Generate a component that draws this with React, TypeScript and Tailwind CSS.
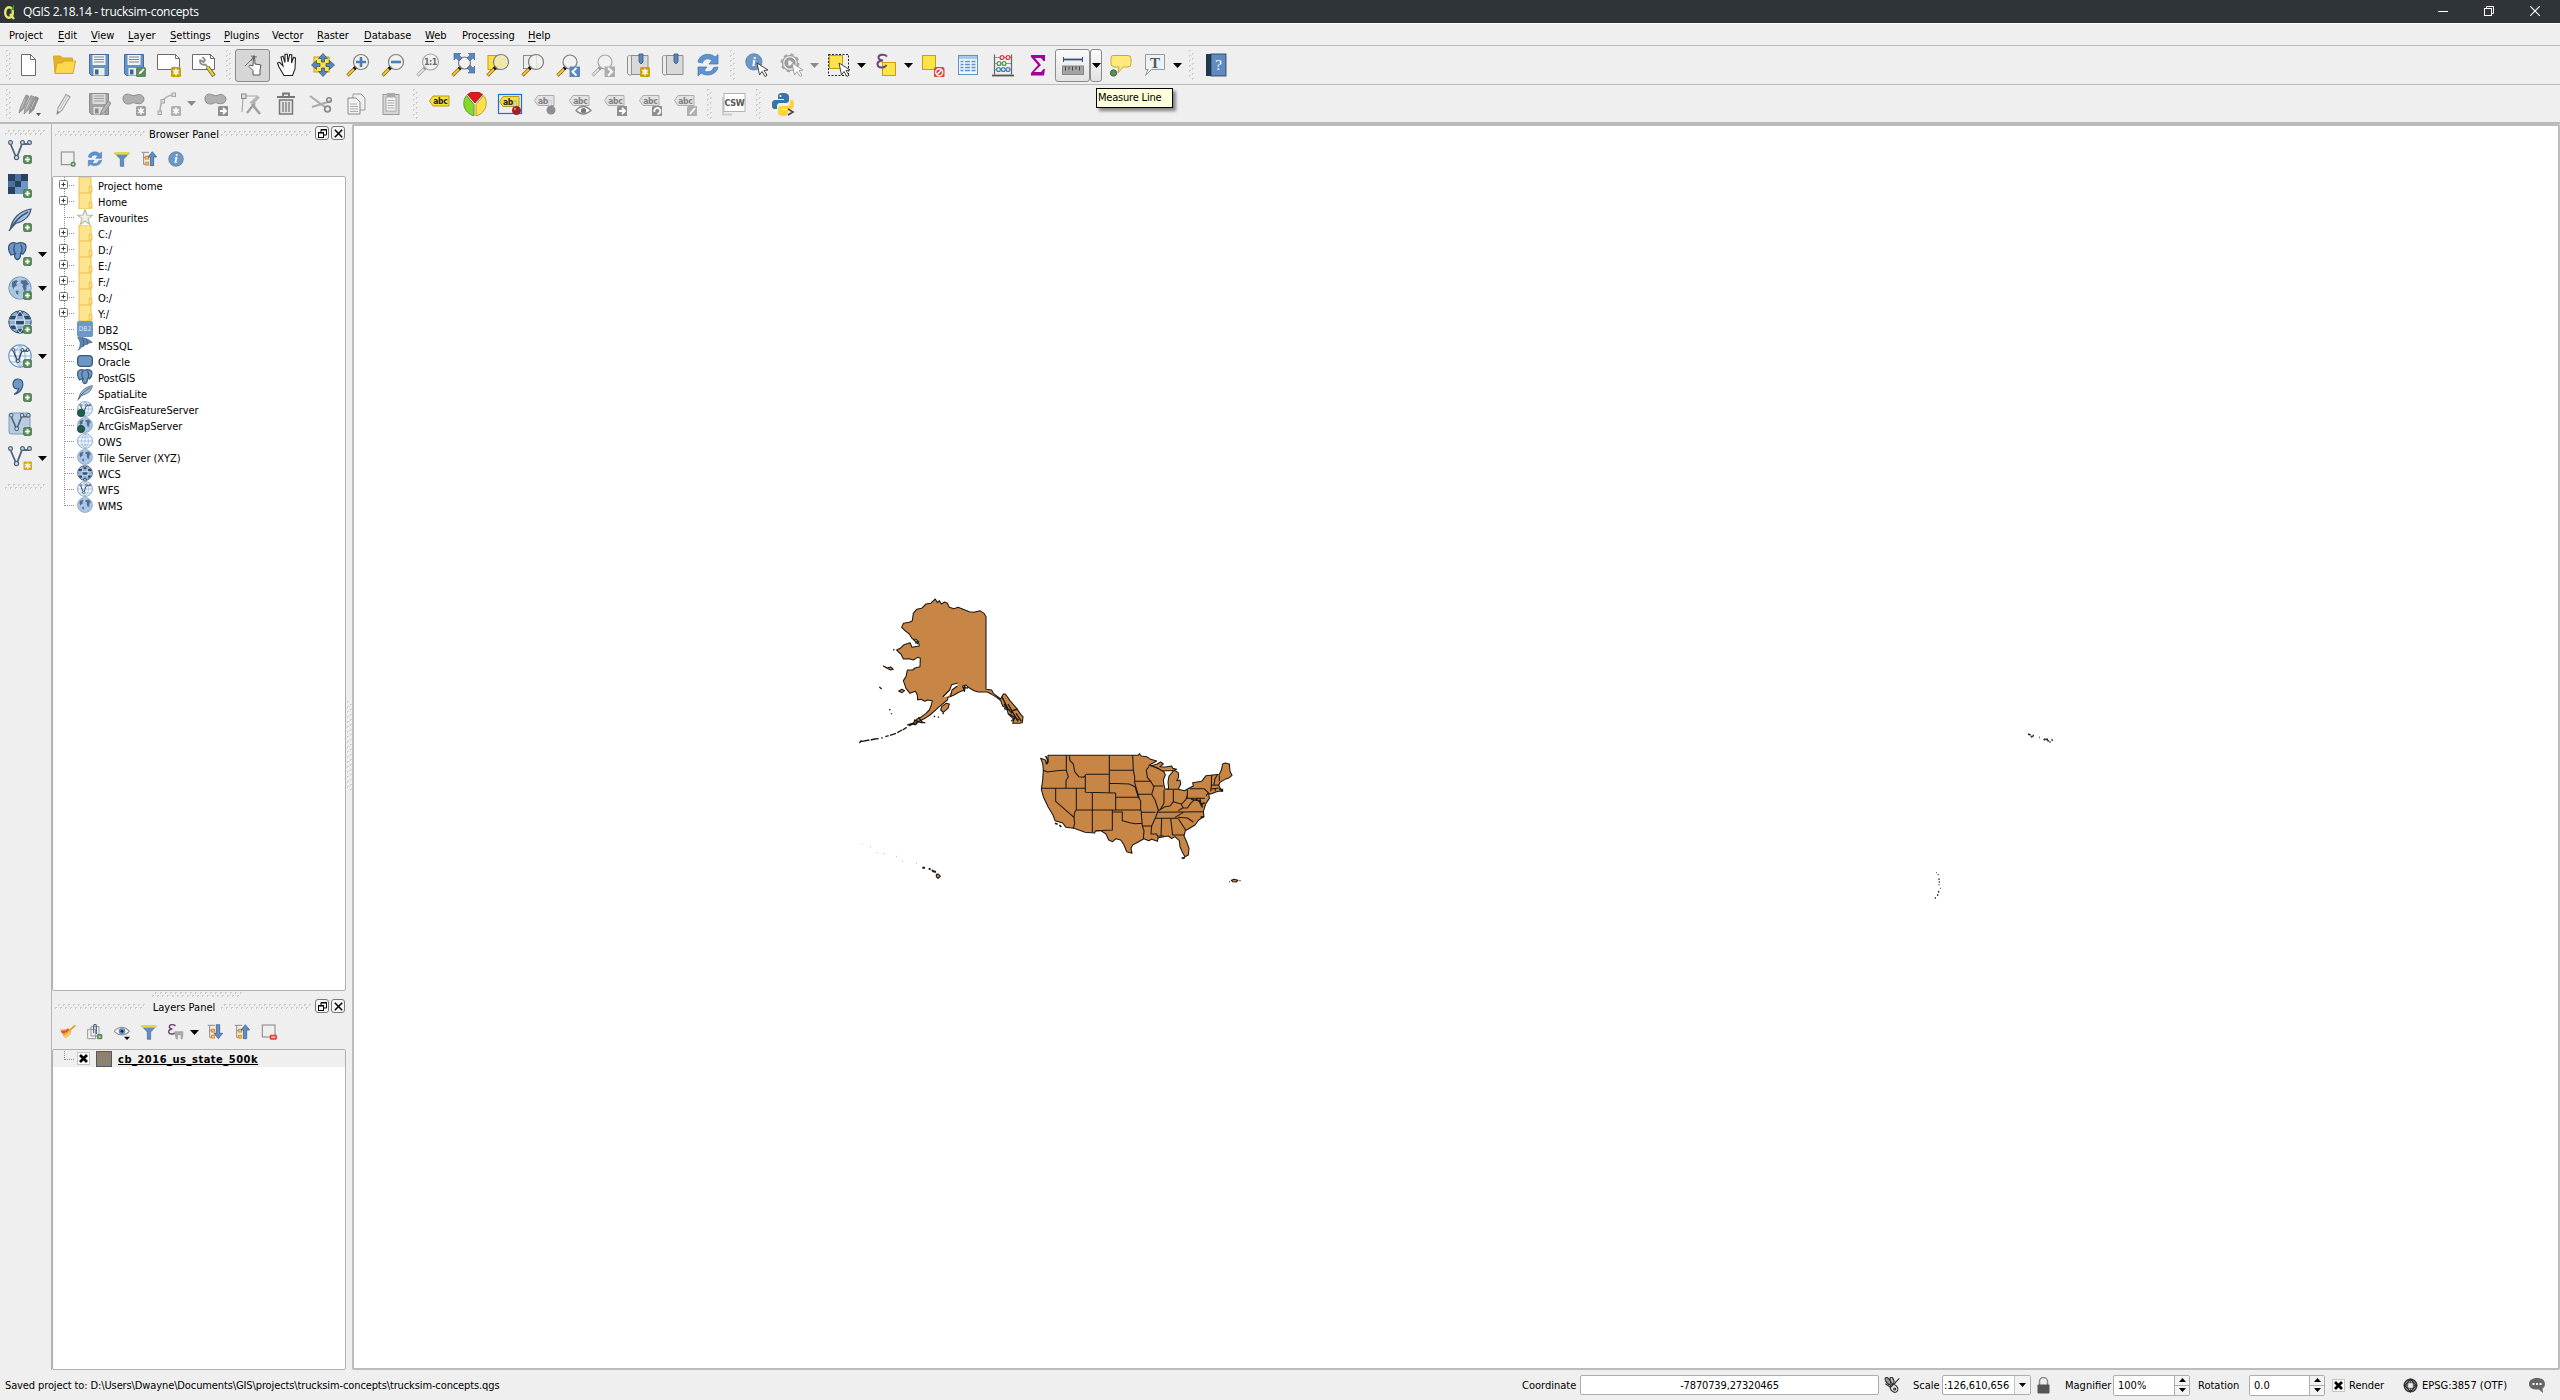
import React from "react";

type P = { children?: React.ReactNode };

const BLUE = "#6d97c4";
const NAVY = "#3d5a7a";

function Ic({ s = 24, children }: P & { s?: number }) {
  return (
    <svg width={s} height={s} viewBox="0 0 24 24" fill="none" className="block shrink-0">
      {children}
    </svg>
  );
}

/* ---------- badges ---------- */
const Plus = () => (
  <g>
    <rect x="15.5" y="15.5" width="8" height="8" rx="1.5" fill="#5b8c5a" stroke="#4a7a49" strokeWidth=".8" />
    <path d="M19.5 17v5M17 19.5h5" stroke="#fff" strokeWidth="1.7" />
  </g>
);
const Star = ({ c = "#c9a000" }: { c?: string }) => (
  <g>
    <rect x="14" y="14" width="10" height="10" rx="1.5" fill={c} />
    <path d="M19 15.5v7M16 17.2l6 3.6M22 17.2l-6 3.6" stroke="#fff" strokeWidth="1.5" />
  </g>
);
const GreyBadge = ({ d, c = "#8e8e8e" }: { d: string; c?: string }) => (
  <g>
    <rect x="14" y="14" width="10.5" height="10.5" rx="1.5" fill={c} />
    <path d={d} stroke="#fff" strokeWidth="1.8" />
  </g>
);

/* ---------- main toolbar ---------- */
const NewFile = () => (
  <Ic><path d="M4.500 1.500h9l5 5v16h-14z" fill="#fff" stroke="#6b6b6b" /><path d="M13.500 1.500v5h5" stroke="#6b6b6b" /></Ic>
);
const Open = () => (
  <Ic>
    <path d="M1.500 3h7l2 2h10v15H3z" fill="#e3b22c" stroke="#d9a520" />
    <path d="M3 20.500 5 10h5l2-2h11.500l-2.500 12.500z" fill="#ffd84f" stroke="#d9a520" />
  </Ic>
);
const Disk = ({ g }: { g?: boolean }) => (
  <g>
    <path d="M2.500 1.500h19v21h-17l-2-2z" fill={g ? "#a3a3a3" : "#6692c6"} stroke={g ? "#8a8a8a" : "#466b9b"} />
    <rect x="5.500" y="2" width="13" height="10" fill={g ? "#dcdcdc" : "#f3f3f3"} />
    <path d="M7 4h10M7 6.500h10M7 9h10" stroke={g ? "#9d9d9d" : "#7d8794"} />
    <rect x="6.500" y="15" width="11" height="7.500" fill={g ? "#ddd" : "#eee"} />
    <rect x="8" y="16.500" width="3.500" height="5" fill={g ? "#8a8a8a" : "#41648f"} />
  </g>
);
const Save = () => <Ic><Disk /></Ic>;
const SaveAs = () => (
  <Ic><Disk /><rect x="14" y="14" width="10" height="10" rx="1.5" fill="#5b8c5a" /><path d="M16.500 21.500l1-2.500 4-3.500 1 1-3.500 4z" fill="#fff" /></Ic>
);
const NewComposer = () => (
  <Ic><path d="M.5 1.500h18l4 4v11H.5z" fill="#fff" stroke="#6b6b6b" /><path d="M18.500 1.500v4h4" stroke="#6b6b6b" /><Star /></Ic>
);
const Wrench = () => (
  <Ic>
    <path d="M.5 1.500h18l4 4v11H.5z" fill="#fff" stroke="#6b6b6b" /><path d="M18.500 1.500v4h4" stroke="#6b6b6b" />
    <path d="M15.500 14l6.500 9" stroke="#6d5f1e" strokeWidth="4" /><path d="M15.500 14l6 8.500" stroke="#e9c84a" strokeWidth="2.500" />
    <path d="M8 6.500c-.5 4 2 6 5.500 5l2 2.500M8.500 7l3 2 1.500-2-2.500-3" stroke="#8a8a8a" strokeWidth="1.800" />
  </Ic>
);
const Touch = () => (
  <Ic>
    <path d="M12.500 3 12 13l-3-1-1 1.500 4 4V22h7v-5l1-5-6-1-.5-8z" fill="#fff" stroke="#555" />
    <path d="M13 2.500 10 8M13 4l-9 9M10 3l6 1" stroke="#666" strokeWidth=".9" />
  </Ic>
);
const Hand = () => (
  <Ic>
    <path d="M8 22.500 3 14l-1.500-4 2-.7L7 13 5 4l2-.8L9 9.500 9 1.200h2.300L12 9l1.700-7.500 2.100.3L15.500 10l2-5.500 2 .5-.5 11-2.500 6.500z" fill="#fff" stroke="#222" strokeWidth="1.100" />
  </Ic>
);
const Arrows4 = () => (
  <Ic>
    <rect x="3" y="4" width="15" height="15" fill="#ffe24a" stroke="#c9a000" />
    <g fill="#5a86bd" stroke="#2f5580" strokeWidth=".8">
      <path d="M12 .5l4.500 5h-3v3.500h-3V5.500h-3zM12 23.500l4.500-5h-3V15h-3v3.500h-3zM.5 12l5-4.500v3H9v3H5.500v3zM23.500 12l-5-4.500v3H15v3h3.500v3z" />
    </g>
  </Ic>
);
const Lens = ({ g, r = 7.5, cx = 15, cy = 9, children }: P & { g?: boolean; r?: number; cx?: number; cy?: number }) => (
  <g>
    <path d="M10 14 1.500 22.500" stroke={g ? "#a5a5a5" : "#8a6914"} strokeWidth="3.200" />
    <path d="M8 16 1.800 22.200" stroke={g ? "#e0e0e0" : "#fcc52d"} strokeWidth="1.800" />
    <path d="M10.500 13.500 8 16" stroke={g ? "#999" : "#111"} strokeWidth="3.200" />
    <circle cx={cx} cy={cy} r={r} fill="#f1f1ee" fillOpacity=".8" stroke={g ? "#a5a5a5" : "#7c7c7c"} strokeWidth="1.200" />
    {children}
  </g>
);
const ZoomIn = () => <Ic><Lens><path d="M15 4v10M10 9h10" stroke="#4b7cb5" strokeWidth="2.600" /></Lens></Ic>;
const ZoomOut = () => <Ic><Lens><path d="M10 9h10" stroke="#4b7cb5" strokeWidth="2.600" /></Lens></Ic>;
const Zoom11 = () => (
  <Ic><Lens g r={8} cx={14.5}><text x="14.500" y="12.300" textAnchor="middle" fill="#6a6a6a" className="font-['DejaVu_Sans'] text-[9px] font-bold tracking-[-0.5px]">1:1</text></Lens></Ic>
);
const ZoomFull = () => (
  <Ic><Lens r={6} cx={13.5} cy={10} />
    <path d="M3 0h7L8 2l3 3-3 3-3-3-2 2zM24 0v7l-2-2-3 3-3-3 3-3-2-2zM24 20h-7l2-2-3-3 3-3 3 3 2-2z" fill="#5a86bd" stroke="#3c638f" strokeWidth=".6" />
  </Ic>
);
const ZoomSel = () => <Ic><rect x="2" y="2.500" width="13" height="14" fill="#fbe04c" stroke="#c9a000" /><Lens><circle cx="15" cy="9" r="6" fill="#f0e7a8" /></Lens></Ic>;
const ZoomLayer = () => <Ic><rect x="2.500" y="2.500" width="13" height="13" stroke="#8a8a8a" fill="#eee" /><Lens /></Ic>;
const ZoomLast = () => (
  <Ic><Lens r={7} cx={14} /><rect x="13.500" y="13.500" width="10.500" height="10.500" fill="#5a86bd" /><path d="M20.500 15l-4 3.700 4 3.700" stroke="#fff" strokeWidth="2" /></Ic>
);
const ZoomNext = () => (
  <Ic><Lens g r={7} cx={14} /><rect x="13.500" y="13.500" width="10.500" height="10.500" fill="#adadad" /><path d="M17 15l4 3.700-4 3.700" stroke="#fff" strokeWidth="2" /></Ic>
);
const Book = () => (
  <g>
    <path d="M5 2.500h17v19H4z" fill="#d9d9d9" stroke="#8f8f8f" />
    <path d="M1.500 4c0-2 4-2 4 0v17c0 2-4 1-4-1z" fill="#ececec" stroke="#8f8f8f" />
    <path d="M13 1h4v8l-2 2-2-2z" fill="#5a86bd" stroke="#33557f" strokeWidth=".8" />
  </g>
);
const Bookmark = () => <Ic><Book /></Ic>;
const BookmarkNew = () => <Ic><Book /><Star /></Ic>;
const RefreshG = () => (
  <g fill="#5e93cf" stroke="#3f74b0" strokeWidth=".7">
    <path d="M2 9c1-8 12-10 17-5l3-2.500V11h-9l3-3.500C13 5 8 5 6.500 10z" />
    <path d="M22 14c-1 8-12 10-17 6l-3 3v-9h9l-3 3.500c3 2 8 2 9.500-3z" />
  </g>
);
const Refresh = ({ s }: { s?: number }) => <Ic s={s}><RefreshG /></Ic>;
const Cursor = ({ g }: { g?: boolean }) => (
  <path d="M12 10l2.500 12 2.500-3.500 3 5 2-1.200-3-4.800 4-.5z" fill="#fff" stroke={g ? "#999" : "#333"} strokeWidth=".9" />
);
const InfoG = () => (
  <g>
    <circle cx="12" cy="12" r="11" fill="#6d97c4" stroke="#4c78a9" />
    <text x="12" y="18" textAnchor="middle" fill="#fff" className="font-['Liberation_Serif'] text-[18px] font-bold italic">i</text>
  </g>
);
const Identify = () => <Ic><g transform="translate(0 0) scale(.74)"><InfoG /></g><Cursor /></Ic>;
const Gear = () => (
  <Ic>
    <circle cx="10" cy="10" r="7.500" stroke="#9b9b9b" strokeWidth="1.200" fill="#e9e9e9" />
    <circle cx="10" cy="10" r="8.500" stroke="#a5a5a5" strokeWidth="1.800" strokeDasharray="3.500 3.170" />
    <circle cx="10" cy="10" r="5" fill="#a0a0a0" stroke="#8a8a8a" /><path d="M8.500 7l5 3-5 3z" fill="#fff" /><Cursor g />
  </Ic>
);
const SelectI = () => (
  <Ic><rect x="1.500" y="1.500" width="20" height="21" stroke="#222" strokeDasharray="2 1.500" /><rect x="2.500" y="2.500" width="13" height="13" fill="#ffe24a" stroke="#c9a000" /><Cursor /></Ic>
);
const ExprSel = () => (
  <Ic>
    <rect x="8.500" y="9.500" width="13" height="13" fill="#fbe34a" stroke="#c9a000" />
    <path d="M13 3.500C11 1 4.500 1 4.500 4.500 4.500 7 9 7.500 9 7.500S3 7.500 3.500 11.500s7 4 9 .5" stroke="#6b4a77" strokeWidth="2" />
  </Ic>
);
const Deselect = () => (
  <Ic><rect x="1.500" y="2.500" width="13" height="14" fill="#fbe34a" stroke="#c9a000" /><rect x="13" y="14" width="10.500" height="10.500" rx="2" fill="#d8463f" /><circle cx="18.200" cy="19.200" r="3.500" stroke="#fff" strokeWidth="1.400" /><path d="M16 21.500l4.500-4.500" stroke="#fff" strokeWidth="1.400" /></Ic>
);
const Table = () => (
  <Ic><rect x="2.500" y="2.500" width="19" height="19" fill="#eef4fb" stroke="#5f93c9" /><path d="M3 4.500h18" stroke="#a9c8e8" strokeWidth="3" /><path d="M4.500 8.500h3M9 8.500h5M15.500 8.500h4M4.500 11.500h3M9 11.500h5M15.500 11.500h4M4.500 14.500h3M9 14.500h5M15.500 14.500h4M4.500 17.500h3M9 17.500h5M15.500 17.500h4" stroke="#5f93c9" strokeWidth="1.300" /></Ic>
);
const Abacus = () => (
  <Ic>
    <path d="M3.500 1.500v20M20.500 1.500v20" stroke="#666" strokeWidth="1.200" /><path d="M1 22.500h22" stroke="#555" strokeWidth="1.800" /><path d="M4 4.500h16M4 10.500h16M4 16.500h16" stroke="#8a8a8a" strokeWidth=".9" />
    <g strokeWidth="1.300" fill="#f6f6f6">
      <g stroke="#cf3b3b"><circle cx="11" cy="4.500" r="1.900" /><circle cx="17" cy="4.500" r="1.900" /></g>
      <g stroke="#4f9b4f"><circle cx="8" cy="10.500" r="1.900" /><circle cx="13" cy="10.500" r="1.900" /></g>
      <g stroke="#4b7cb5"><circle cx="7.500" cy="16.500" r="1.900" /><circle cx="12.300" cy="16.500" r="1.900" /><circle cx="17" cy="16.500" r="1.900" /></g>
    </g>
  </Ic>
);
const Sigma = () => <Ic><path d="M5 2h14v6h-1.500L15 5H9l6 7-7 7h7l2.500-3H19l-1 6.500H5V20l7-8L5 4z" fill="#a2009e" /></Ic>;
const Measure = () => (
  <Ic>
    <path d="M3 6.500h18" stroke="#2f5580" strokeWidth="1.800" /><path d="M2.500 4v5M21.500 4v5" stroke="#2f5580" />
    <rect x="1.500" y="13" width="21" height="8.500" fill="#a3a3a3" stroke="#858585" /><path d="M4.500 13.500v4M8 13.500v3M11.500 13.500v4M15 13.500v3M18.500 13.500v4" stroke="#444" />
  </Ic>
);
const Tip = () => (
  <Ic><path d="M5 2.500h15q3 0 3 3V11q0 3-3 3h-5l-5 6 1-6H6q-3-1-3-3V5q0-2.500 2-2.500z" fill="#ffe97a" stroke="#c9a83a" /><circle cx="5.500" cy="20" r="3.200" fill="#5b8c5a" stroke="#3f6b3e" /></Ic>
);
const TextAnn = () => (
  <Ic><path d="M2.500 1.500h19v15h-13l-6 6 2.500-6H2.500z" fill="#eaf2fa" stroke="#999" /><text x="12" y="14.500" textAnchor="middle" fill="#555" className="font-['Liberation_Serif'] text-[15px] font-bold">T</text></Ic>
);
const Help = () => (
  <Ic><rect x="2" y="1" width="5" height="22" fill="#22384f" /><rect x="7" y="1" width="15" height="22" fill="#5f8cc0" stroke="#22384f" strokeWidth=".8" /><text x="14.500" y="17" textAnchor="middle" fill="#fff" className="font-['Liberation_Serif'] text-[15px]">?</text></Ic>
);

/* ---------- digitizing and label toolbar ---------- */
const Pencils = () => (
  <Ic>
    <g stroke="#8a8a8a" strokeWidth=".8">
      <path d="M2 21l1.500-6L9 3l3 1.200L6.500 17z" fill="#9c9c9c" />
      <path d="M7 22l1-6 6-12.500 3 1.200L11.500 18z" fill="#a8a8a8" />
      <path d="M12 22l1-6 5-11.500 3.500 1.500-5 12z" fill="#909090" />
    </g>
    <path d="M8 7L4.500 16M13 8l-4 9M18 8l-4 9" stroke="#cfcfcf" strokeWidth=".8" />
    <path d="M19 21h5l-2.500 3z" fill="#555" />
  </Ic>
);
const Pencil = () => <Ic><path d="M5 22l1-6 8-13.500 4 2.200-8 13.500z" fill="#ececec" stroke="#9f9f9f" strokeWidth="1.100" /><path d="M8 17l7.500-13" stroke="#bbb" /><path d="M5 22l.6-3 2 1.200z" fill="#777" /></Ic>;
const SaveEdit = () => <Ic><Disk g /><path d="M13 23l2-5 6-9 3 2-6 9z" fill="#b5b5b5" stroke="#8a8a8a" /></Ic>;
const blob = "M1 6.500c0-5 5-5 8-3.500s5 0 7-.5 6 1.500 6 4.500-3 5.500-7 4.500-4-1-6 0-8 1-8-5z";
const AddFeat = () => <Ic><path d={blob} fill="#b0b0b0" stroke="#8c8c8c" /><Star c="#a0a0a0" /></Ic>;
const CurveI = () => <Ic><path d="M3 20C3 10 7 4 16 3" stroke="#b0b0b0" strokeWidth="1.500" /><g fill="#ddd" stroke="#a5a5a5"><rect x="1" y="19" width="3.500" height="3.500" /><rect x="4" y="7.500" width="3.500" height="3.500" /><rect x="15" y="1" width="3.500" height="3.500" /></g><Star c="#b0b0b0" /></Ic>;
const MoveFeat = () => <Ic><path d={blob} fill="#b0b0b0" stroke="#8c8c8c" /><GreyBadge d="M16 19h6M19 16l3 3-3 3" /></Ic>;
const NodeTool = () => (
  <Ic><path d="M7 4h12M4 7L3 20" stroke="#a5a5a5" strokeWidth="1.100" /><rect x="2.500" y="2" width="4.500" height="4.500" fill="#ddd" stroke="#888" /><path d="M8 21l8-10" stroke="#9f9f9f" strokeWidth="2.200" /><path d="M13 12l8 10" stroke="#9f9f9f" strokeWidth="2.500" /><path d="M10 11l8-7 3 1-6 7z" fill="#b5b5b5" /></Ic>
);
const Trash = () => <Ic><path d="M3 5h18M9 4V1.500h6V4" stroke="#777" strokeWidth="1.800" /><path d="M5.500 8h13v14h-13z" fill="#e4e4e4" stroke="#777" strokeWidth="1.500" /><path d="M9 10v10M12 10v10M15 10v10" stroke="#777" strokeWidth="1.300" /></Ic>;
const Cut = () => <Ic><path d="M1 4l15 11M3 15l19-6" stroke="#aaa" strokeWidth="2" /><circle cx="18.500" cy="17" r="2.800" stroke="#8a8a8a" strokeWidth="1.800" /><circle cx="20" cy="8" r="2.300" stroke="#8a8a8a" strokeWidth="1.600" /></Ic>;
const Copy = () => <Ic><path d="M9 2h8l4 4v12H9z" fill="#eee" stroke="#999" /><path d="M4 6h8l4 4v12H4z" fill="#f2f2f2" stroke="#888" /><path d="M6 12h7M6 14.500h8M6 17h8M6 19.500h8" stroke="#aaa" /></Ic>;
const Paste = () => <Ic><rect x="4" y="2.500" width="16" height="20" fill="#d5d5d5" stroke="#999" /><rect x="7" y="5" width="10" height="14" fill="#f3f3f3" stroke="#aaa" /><rect x="8" y="1" width="8" height="4" fill="#aaa" /><path d="M8.500 8.500h7M8.500 11h7M8.500 13.500h7M8.500 16h7" stroke="#aaa" /></Ic>;

const Tag = ({ c = "#f7e03c", s = "#b89a10", t = "abc", tc = "#222", x = 12.3, y = 0 }: { c?: string; s?: string; t?: string; tc?: string; x?: number; y?: number }) => (
  <g transform={`translate(0 ${y})`}>
    <path d="M1.500 8.500l3.500-5H21v10H5z" fill={c} stroke={s} />
    <text x={x} y="11.600" textAnchor="middle" fill={tc} className="font-['DejaVu_Sans'] text-[8.5px] font-bold tracking-[-0.4px]">{t}</text>
  </g>
);
const GTag = ({ t, x }: { t?: string; x?: number }) => <Tag c="#e2e2e2" s="#adadad" tc="#808080" t={t} x={x} />;
const LabelI = () => <Ic><Tag y={0.5} /></Ic>;
const Pie = () => (
  <Ic><g strokeWidth=".8"><path d="M12 11L4.500 2.500a12 12 0 0115 0z" fill="#dd1b1b" stroke="#8d1111" /><path d="M13 12.500l7.500-9c5 6 3.500 17-7.500 20.500z" fill="#ffe24a" stroke="#a88c14" /><path d="M11 12.500L3.500 3.500c-5 6-3.500 17 7.500 20.500z" fill="#86d92a" stroke="#4b8a12" /></g></Ic>
);
const LabelPin = () => (
  <svg width="24" height="24" viewBox="0 0 24 24" fill="none" className="block overflow-visible">
    <rect x=".5" y="2.500" width="23" height="19" stroke="#1a6fe0" strokeWidth="1.200" /><Tag t="ab" x={10} y={1} /><path d="M16 9h2v8h-2z" fill="#fff" stroke="#777" strokeWidth=".6" /><circle cx="18.500" cy="18.500" r="4.500" fill="#a81f1f" /><circle cx="17" cy="17" r="1.200" fill="#d67a7a" />
  </svg>
);
const LabelPin2 = () => <Ic><GTag t="ab" x={10} /><path d="M16 8.500h2v8h-2z" fill="#fff" stroke="#aaa" strokeWidth=".6" /><circle cx="18" cy="18" r="4.500" fill="#8e8e8e" /></Ic>;
const LabelEye = () => <Ic><GTag /><path d="M8 18.500q7-8 15 0-8 7-15 0z" fill="#fff" stroke="#888" strokeWidth="1.300" /><circle cx="15.500" cy="18.500" r="2.600" fill="#777" /></Ic>;
const LabelMove = () => <Ic><GTag /><GreyBadge d="M16 19h6M19 16l3 3-3 3" /></Ic>;
const LabelRot = () => <Ic><GTag /><GreyBadge d="M16.500 20a3 3 0 113 2" /></Ic>;
const LabelEdit = () => <Ic><GTag /><GreyBadge d="M17 22l5-6" c="#b0b0b0" /></Ic>;
const Csw = () => (
  <Ic><path d="M1 5v17.500h9" stroke="#ccc" strokeWidth="2" /><rect x="2" y="1.500" width="21" height="18" fill="#fff" stroke="#b5b5b5" /><text x="12.500" y="13.500" textAnchor="middle" fill="#555" className="font-['DejaVu_Sans'] text-[9px] font-bold tracking-[-0.3px]">CSW</text></Ic>
);
const Python = () => (
  <Ic>
    <path d="M12 1C7 1 7 3 7 5v2h6v1H4C1 8 1 11 1 13s0 4 3 4h2v-3c0-2 1-3 3-3h6c2 0 3-1 3-3V5c0-3-2-4-6-4z" fill="#3b73a5" />
    <path d="M12 24c5 0 5-2 5-4v-2h-6v-1h9c3 0 3-3 3-5s0-4-3-4h-1v3c0 2-1 3-3 3h-6c-2 0-3 1-3 3v4c0 2 2 3 5 3z" fill="#ffd43b" />
    <circle cx="9.500" cy="4" r="1" fill="#fff" /><path d="M17 17l5 3-5 3" stroke="#444" strokeWidth="1.600" />
  </Ic>
);

/* ---------- data source icons ---------- */
const VG = ({ sc = "#4e657d" }: { sc?: string }) => (
  <g stroke={sc} strokeWidth="1.200"><path d="M2.500 4l5.500 13M9 17l5-13h8" strokeWidth="1.800" /><g fill="#cfdcec"><circle cx="2.500" cy="2.500" r="1.900" /><circle cx="14.500" cy="2.500" r="1.900" /><circle cx="21.500" cy="2.500" r="1.900" /><circle cx="8.500" cy="17.500" r="2.100" /></g></g>
);
const AddVector = () => <Ic><VG /><Plus /></Ic>;
const AddRaster = () => (
  <Ic><rect width="20" height="20" fill={BLUE} /><path d="M0 0h7v7H0zM13 0h7v7h-7zM7 7h6v6H7zM0 13h7v7H0z" fill="#28425f" /><path d="M7 0h6v7H7zM0 7h7v6H0z" fill="#4a719f" /><Plus /></Ic>
);
const FeatherG = () => (
  <g><path d="M2.500 21C4 11 11 3 23 1c-1 7-6 12-15.500 14.500z" fill="#a5bfdc" stroke={NAVY} strokeWidth="1.200" /><path d="M1 23C6 14 12 8 20 4" stroke={NAVY} strokeWidth="1.400" /></g>
);
const AddFeather = () => <Ic><FeatherG /><Plus /></Ic>;
const ElephantG = () => (
  <g stroke="#36557b" strokeWidth="1.300" fill={BLUE}><path d="M1.500 2.500c2-2 5-2 7-1 3-1 7-1 9 1 1 3 0 7-2.500 9.500l-2.500-.5c0 3 0 6-3 6s-3-3-3-5.500l-3.500 1C1 10 0 5.500 1.500 2.500z" /><path d="M7 2.500C5 6 6 10 8 12.500M12.500 2.500c2 3 2 6 .5 9" fill="none" /></g>
);
const AddPg = () => <Ic><ElephantG /><Plus /></Ic>;
const GlobeG = () => (
  <g><circle cx="12" cy="12" r="11.200" fill="#a9c3e0" stroke="#6d97c4" /><path d="M1 12h22M3 6.500h18M12 1c-7 7-7 15 0 22M12 1c7 7 7 15 0 22" stroke="#c9daee" strokeWidth=".8" /><path d="M4 6l4.500-2 1.500 1.500-2 2 1 2-2.500 1.500-1 2.500L4 10zM13 4.500l5-.5 3 4-2.500 1.500 0 4-2 2-2-4.500.5-3-2.500-1zM7.500 14.500l3 .5-.5 4-2-1.500z" fill="#4d6d92" /></g>
);
const AddWms = () => <Ic><GlobeG /><Plus /></Ic>;
const DarkGlobeG = () => (
  <g><circle cx="12" cy="12" r="11.200" fill="#8fb0d4" stroke="#2d4a6b" /><path d="M3 6h5l-1 4H1.500zM9 6h6V1.500H9zM16 6h5l1.500 4H17zM8 11h8v4H8zM2 15h5l1 4H4zM17 15h5l-3 4h-3zM9 19h6v4H9z" fill="#2d4a6b" /><path d="M1 10h22M1.500 15h21M12 1c-6 7-6 15 0 22M12 1c6 7 6 15 0 22" stroke="#dfe9f4" strokeWidth="1" /></g>
);
const AddWcs = () => <Ic><DarkGlobeG /><Plus /></Ic>;
const LightGlobeG = () => (
  <g><circle cx="12" cy="12" r="11.200" fill="#f2f7fc" stroke="#6d97c4" strokeWidth="1.200" /><path d="M1 12h22M3 6h18M3 18h18M12 1v22M12 1c-7 7-7 15 0 22M12 1c7 7 7 15 0 22" stroke="#8fb3da" strokeWidth="1" /></g>
);
const WfsG = () => <g><LightGlobeG /><g transform="translate(3.500 4) scale(.75)"><VG sc="#2f4760" /></g></g>;
const AddWfs = () => <Ic><WfsG /><Plus /></Ic>;
const AddCsv = () => <Ic><path d="M10 1c4.500 0 5.500 4 4.500 7.500s-4 7-8.500 8c3-2 4.500-4 4.500-6-3 1-5.500-1-5.500-4.500S7.500 1 10 1z" fill="#6d97c4" stroke={NAVY} strokeWidth="1.200" /><Plus /></Ic>;
const AddVirtual = () => <Ic><rect x="1" y="1" width="21" height="21" rx="2" fill="#b9cce0" stroke="#7f9ab8" /><g transform="translate(1 1) scale(.9)"><VG /></g><Plus /></Ic>;
const NewVector = () => <Ic><VG /><g transform="translate(1 1)"><rect x="14.500" y="14.500" width="8.500" height="8.500" rx="1" fill="#d5ad14" /><path d="M18.700 15.700v6M16 17.200l5.500 3M21.500 17.200L16 20.200" stroke="#fff" strokeWidth="1.300" /></g></Ic>;

/* ---------- tree icons (16px) ---------- */
const Folder = () => (
  <Ic s={16}><path d="M3 0h18v24H3z" fill="#ffe490" stroke="#e6bf45" strokeWidth="1.400" /><path d="M18.500 14.500h4v8h-4z" fill="#ffe490" stroke="#e6bf45" strokeWidth="1.400" /></Ic>
);
const FavStar = () => <Ic s={16}><path d="M12 1l3 8 8 .5-6.500 5L19 23l-7-5-7 5 2.500-8.500L1 9.500 9 9z" fill="#f1f0e8" stroke="#b5b5a0" strokeWidth="1.600" /></Ic>;
const Db2 = () => (
  <Ic s={16}><rect width="24" height="24" rx="3" fill={BLUE} /><text x="12" y="15.500" textAnchor="middle" fill="#dfe9f4" className="font-['DejaVu_Sans'] text-[10px]">DB2</text></Ic>
);
const Mssql = () => <Ic s={16}><path d="M1 1c8-1 15 1 22 7-7 1-15 5-21 12 4-8 4-13-1-19z" fill="#5f86b3" stroke={NAVY} /><path d="M8 1c3 5 3 10 1 14M14 3c2 4 2 6 1 9" stroke={NAVY} strokeWidth="1.300" /></Ic>;
const Oracle = () => <Ic s={16}><rect x="1" y="4" width="22" height="16" rx="5" fill={BLUE} stroke={NAVY} strokeWidth="2" /></Ic>;
const Elephant = () => <Ic s={16}><g transform="scale(1.250)"><ElephantG /></g></Ic>;
const Feather = () => <Ic s={16}><FeatherG /></Ic>;
const Dot = () => <circle cx="6" cy="18" r="5.500" fill="#1f5c4a" stroke="#173f33" />;
const ArcF = () => <Ic s={16}><WfsG /><Dot /></Ic>;
const ArcM = () => <Ic s={16}><GlobeG /><Dot /></Ic>;
const Ows = () => <Ic s={16}><LightGlobeG /></Ic>;
const Wms = () => <Ic s={16}><GlobeG /></Ic>;
const Wcs = () => <Ic s={16}><DarkGlobeG /></Ic>;
const Wfs = () => <Ic s={16}><WfsG /></Ic>;

/* ---------- panel toolbar icons (16px) ---------- */
const AddSel = () => <Ic s={16}><rect x="2" y="1.500" width="19" height="19" stroke="#8a8a8a" strokeWidth="1.600" /><rect x="16" y="16" width="7.500" height="7.500" rx="3" fill="#5b8c5a" /><circle cx="19.700" cy="19.700" r="1.500" fill="#cfe3cf" /></Ic>;
const Funnel = () => <Ic s={16}><path d="M1 3h22l-8.500 9v11h-5V12z" fill="#5f8fc4" stroke="#3f6a9b" /><path d="M1 3.500h22" stroke="#e8d44a" strokeWidth="4" /></Ic>;
const Collapse = ({ down }: { down?: boolean }) => (
  <Ic s={16}><path d="M1 2h11M4 3v17h4M4 10h4" stroke="#8a8a8a" strokeWidth="1.500" /><rect x="7" y="8" width="4" height="4" stroke="#e98a1c" strokeWidth="1.800" /><rect x="7" y="17" width="4" height="4" stroke="#e98a1c" strokeWidth="1.800" />
    {down ? <path d="M14 1h5v13h4.500L17 22l-6.500-8H14z" fill="#5f8fc4" stroke="#2f5580" /> : <path d="M14 22h5V9h4.500L17 1l-6.500 8H14z" fill="#5f8fc4" stroke="#2f5580" />}
  </Ic>
);
const Info16 = () => <Ic s={16}><InfoG /></Ic>;
const Brush = () => (
  <Ic s={16}>
    <path d="M14 10l9-8" stroke="#d9a520" strokeWidth="2.800" />
    <path d="M0 8c5 1 9 0 12-2l5 6c-2 5-5 8-10 9z" fill="#f0a04a" />
    <path d="M1 10c4 1 8 0 11-3l2 2c-3 3-7 5-11 5z" fill="#e0503a" />
    <path d="M5 18c4-1 7-3 9-7l2 1c-1 4-5 8-9 9z" fill="#f7d354" />
  </Ic>
);
const AddGroup = () => <Ic s={16}><path d="M1 8h12v14H1zM6 4h12v14H6z" fill="#f4f4f4" stroke="#8a8a8a" strokeWidth="1.300" /><path d="M10 14V3c0-3 4-3 4 0v12" stroke={NAVY} strokeWidth="1.600" /><rect x="15" y="15" width="8" height="8" rx="2" fill="#5b8c5a" /><circle cx="19" cy="19" r="1.500" fill="#cfe3cf" /></Ic>;
const Eye = () => <Ic s={16}><path d="M0 11q12-12 23 0-11 11-23 0z" fill="#fff" stroke="#8a8a8a" strokeWidth="1.600" /><circle cx="12" cy="11" r="5" fill="#5f8fc4" /><circle cx="12" cy="11" r="2" fill="#222" /><path d="M15 19h9l-4.500 5z" fill="#000" /></Ic>;
const ExprFilter = () => <Ic s={16}><path d="M11 3C9 0 2 0 2 4c0 3 4.500 3.500 4.500 3.500S.5 8 1 12s7 4 9.500 1" stroke="#6b4a77" strokeWidth="2.200" /><path d="M10 11h13v5l-1 7h-3v-6h-4v6h-3l-2-7z" fill="#a8a8a8" /></Ic>;
const Remove = () => <Ic s={16}><rect x="2" y="1.500" width="19" height="18" stroke="#8a8a8a" strokeWidth="1.600" /><rect x="13" y="16" width="11" height="7.500" rx="2" fill="#e0453f" /><path d="M15.500 19.700h6" stroke="#fff" strokeWidth="1.600" /></Ic>;

/* ---------- chrome pieces ---------- */
const Tri = ({ g }: { g?: boolean }) => (
  <svg width="9" height="5" viewBox="0 0 9 5" className="block shrink-0"><path d="M0 0h9L4.500 5z" fill={g ? "#8a8a8a" : "#000"} /></svg>
);
const Cell = ({ children, arrow }: P & { arrow?: "on" | "off" }) => (
  <div className="flex shrink-0 items-center">
    <div className="flex w-[35px] items-center justify-center">{children}</div>
    {arrow && <div className="flex w-3 items-center justify-center pr-0.5"><Tri g={arrow === "off"} /></div>}
  </div>
);
const VGrip = ({ h = 30 }: { h?: number }) => (
  <svg width="5" height={h} className="block shrink-0">
    {Array.from({ length: Math.floor(h / 5) }, (_, i) => (
      <g key={i}><rect x="0" y={i * 5} width="2" height="2" fill="#cdcdcd" /><rect x="3" y={i * 5 + 3} width="2" height="2" fill="#cdcdcd" /><rect x="1" y={i * 5 + 1} width="1" height="1" fill="#fff" /><rect x="4" y={i * 5 + 4} width="1" height="1" fill="#fff" /></g>
    ))}
  </svg>
);
const HGrip = ({ w }: { w: number }) => (
  <svg width={w} height="5" className="block shrink-0">
    {Array.from({ length: Math.floor(w / 5) }, (_, i) => (
      <g key={i}><rect y="3" x={i * 5} width="2" height="2" fill="#c8c8c8" /><rect y="0" x={i * 5 + 3} width="2" height="2" fill="#c8c8c8" /><rect y="4" x={i * 5 + 1} width="1" height="1" fill="#fff" /><rect y="1" x={i * 5 + 4} width="1" height="1" fill="#fff" /></g>
    ))}
  </svg>
);
const Grip = () => <div className="flex w-3.5 shrink-0 justify-center"><VGrip /></div>;

const PanelTitle = ({ title }: { title: string }) => (
  <div className="flex h-4 items-center">
    <div className="flex flex-1 items-center justify-between pr-1 pl-[3px]">
      <HGrip w={90} />
      <span className="pt-[3px] pl-0.5">{title}</span>
      <HGrip w={90} />
    </div>
    <div className="flex gap-0.5 pr-0.5">
      <div className="flex size-[14px] items-center justify-center rounded-[3px] border border-[#777] bg-[#f6f6f6]">
        <svg width="9" height="9" fill="none"><path d="M3 3V.5h5.500V6H6" stroke="#000" /><rect x=".5" y="3.500" width="5" height="5" stroke="#000" /><path d="M3 1h6M0 4h6" stroke="#000" /></svg>
      </div>
      <div className="flex size-[14px] items-center justify-center rounded-[3px] border border-[#777] bg-[#f6f6f6]">
        <svg width="9" height="9"><path d="M.8.8l7.400 7.400M8.200.8L.8 8.200" stroke="#000" strokeWidth="1.500" /></svg>
      </div>
    </div>
  </div>
);

const menus: [string, string, string, string][] = [
  ["Pro", "j", "ect", "w-[49px]"], ["", "E", "dit", "w-[33px]"], ["", "V", "iew", "w-[37px]"], ["", "L", "ayer", "w-[42px]"],
  ["", "S", "ettings", "w-[54px]"], ["", "P", "lugins", "w-[48px]"], ["Vect", "o", "r", "w-[45px]"], ["", "R", "aster", "w-[47px]"],
  ["", "D", "atabase", "w-[61px]"], ["", "W", "eb", "w-[37px]"], ["Pro", "c", "essing", "w-[66px]"], ["", "H", "elp", "w-[40px]"],
];

const tree: { label: string; icon: React.ReactNode; open?: boolean }[] = [
  { label: "Project home", icon: <Folder />, open: true }, { label: "Home", icon: <Folder />, open: true },
  { label: "Favourites", icon: <FavStar /> },
  { label: "C:/", icon: <Folder />, open: true }, { label: "D:/", icon: <Folder />, open: true }, { label: "E:/", icon: <Folder />, open: true },
  { label: "F:/", icon: <Folder />, open: true }, { label: "O:/", icon: <Folder />, open: true }, { label: "Y:/", icon: <Folder />, open: true },
  { label: "DB2", icon: <Db2 /> }, { label: "MSSQL", icon: <Mssql /> }, { label: "Oracle", icon: <Oracle /> },
  { label: "PostGIS", icon: <Elephant /> }, { label: "SpatiaLite", icon: <Feather /> },
  { label: "ArcGisFeatureServer", icon: <ArcF /> }, { label: "ArcGisMapServer", icon: <ArcM /> },
  { label: "OWS", icon: <Ows /> }, { label: "Tile Server (XYZ)", icon: <Wms /> }, { label: "WCS", icon: <Wcs /> },
  { label: "WFS", icon: <Wfs /> }, { label: "WMS", icon: <Wms /> },
];

const Branch = ({ plus, last }: { plus?: boolean; last?: boolean }) => (
  <svg width="16" height="16" fill="none" className="block shrink-0">
    <path d={last ? "M5.500 0v9" : "M5.500 0v16"} stroke="#8f8f8f" strokeDasharray="1 1" />
    <path d="M6 8.500h9" stroke="#8f8f8f" strokeDasharray="1 1" />
    {plus && <><rect x=".5" y="3.500" width="8" height="8" rx="1" fill="#fff" stroke="#777" /><path d="M2.500 7.500h4M4.500 5.500v4" stroke="#333" /></>}
  </svg>
);

const Check = () => (
  <span className="flex size-[13px] shrink-0 items-center justify-center border border-[#c4c4c4] bg-white">
    <svg width="9" height="9"><path d="M1 1l7 7M8 1L1 8" stroke="#000" strokeWidth="2.800" /></svg>
  </span>
);

const Spin = ({ v, w }: { v: string; w: string }) => (
  <div className={`flex h-[21px] overflow-hidden rounded-[2px] border border-[#adadad] bg-white ${w}`}>
    <span className="flex-1 self-center pt-0.5 pl-1">{v}</span>
    <div className="flex w-[15px] flex-col border-l border-[#adadad] bg-[#f3f3f3]">
      <div className="flex flex-1 items-center justify-center border-b border-[#adadad]"><svg width="7" height="4"><path d="M0 4h7L3.500 0z" /></svg></div>
      <div className="flex flex-1 items-center justify-center"><svg width="7" height="4"><path d="M0 0h7L3.500 4z" /></svg></div>
    </div>
  </div>
);

/* ---------- map drawing, three units per pixel ---------- */
const States = () => (
  <svg width="420" height="320" viewBox="0 0 1260 960" className="block" fill="#c88646" stroke="#1d1712" strokeWidth="3.200" strokeLinejoin="round">
    <path d="M256,57 262,68 268,62 274,72 284,66 292,70 298,82 312,86 324,82 345,90 358,95 372,97 390,92 402,100 408,110 408,328 425,330 430,340 452,357 460,342 466,342 480,362 500,385 512,403 519,410 517,428 508,430 488,430 492,418 475,402 470,385 458,378 452,362 440,352 425,343 412,336 385,336 372,332 355,322 348,315 338,318 342,330 328,336 312,345 300,350 294,352 292,360 268,380 240,405 228,413 205,425 178,437 190,428 200,418 215,410 228,400 238,390 244,375 247,362 232,360 225,364 212,358 203,360 202,345 196,334 180,340 168,325 160,302 168,290 172,270 188,270 195,264 210,260 211,235 203,232 190,240 178,236 160,237 154,224 140,210 152,204 162,194 180,188 186,202 208,198 205,184 198,178 187,177 178,162 165,152 155,142 160,130 178,127 187,122 190,100 200,88 215,85 228,72 242,70z" />
    <path d="M323,309 305,314 300,330 290,340 280,352 296,348 306,330 322,318z" fill="#fff" stroke="none" />
    <path d="M323,309 305,314 299,330 278,351M302,350 306,330 322,318" fill="none" />
    <path d="M275,380 288,370 298,372 294,385 280,397 272,390zM146,333 156,328 164,332 156,338zM100,258 112,264 122,261 130,268 122,270 110,264z" />
    <path d="M455,350l18,34M462,372l24,28M462,386l18,4M474,372l30,52M480,395l22,-8M478,402l28,18M484,424l14,-14M498,400l16,24M338,322l16,2M345,316l-2,20M190,178l14,14M196,190l8,-6" strokeWidth="4" fill="none" />
    <path d="M28,489l5,-6 4,1M36,484l22,-4M62,480l12,-3 12,-1M94,474l4,-1M106,470l10,-3M120,466l18,-6M142,458l14,-8M158,450l12,-8M172,435l14,-4 10,3 8,-8M192,420l22,8 12,0M205,412l12,14M88,321l7,6M118,388l3,3M124,400l1,3M252,408l3,3M264,410l2,3M278,402l3,-4M130,208l3,3" strokeWidth="4" fill="none" />
    <path d="M572,535 586,540 589,552 594,548 594,526 865,526 868,521 874,528 890,530 902,538 920,543 908,550 897,556 912,560 938,572 942,576 946,585 940,600 942,615 945,628 956,626 954,606 957,588 966,578 972,570 985,578 986,592 980,602 990,600 992,612 985,628 1003,632 1018,624 1030,618 1028,608 1055,604 1068,587 1108,583 1114,570 1118,552 1126,549 1138,552 1140,574 1146,586 1135,595 1125,598 1110,607 1106,616 1112,627 1118,628 1118,634 1104,634 1082,642 1076,640 1078,655 1068,670 1064,682 1060,695 1062,710 1046,720 1035,735 1020,744 1006,752 1002,768 1010,785 1017,805 1015,825 1005,830 998,818 990,800 988,782 975,770 965,776 955,768 925,773 922,784 905,778 896,782 882,776 866,785 848,795 843,805 846,820 830,815 822,795 812,780 798,776 788,785 776,780 768,762 752,752 736,753 734,759 705,757 672,745 648,742 638,729 615,722 609,705 594,680 580,650 574,628 578,600 580,570 578,550z" />
    <path d="M904,557 920,553 932,546 940,552 930,560 946,561 965,558 968,565 980,568 966,572 950,572 938,573 925,565z" />
    <path d="M579,570 592,576 620,572 649,570M649,526V572L655,590 648,602V625M576,625H706M658,526 660,542 670,552 674,575 686,590 700,592 707,586M706,583V637M708,583H778M778,526V637M778,571H852M778,610 838,612 855,620M706,637 797,639M617,625V664L672,712M679,625V690L674,696 672,712 674,730 670,745M727,637V757M677,690H872M797,639V690M797,652H865M855,620 865,652 872,663V690M787,690V750L737,752M787,696H817V722L840,728 856,731 877,730M877,738 882,752 880,776M873,697H917M873,690 877,738M877,738H905M848,526 850,571 854,590V604M853,604H903M862,643H903M853,604 858,622 868,656M905,608 892,592 889,570 897,560M908,618H940M903,606 912,620 905,643 915,660 925,690 917,712 905,738 903,762 920,762 924,773M942,630V670L930,690M970,630V665M950,628H985M926,692 945,680 960,678 970,665 985,670 995,672 1008,658 1012,645M1012,628V655H1065M1020,626H1062L1075,638 1068,648M993,672 1000,684 1012,684 1022,670 1030,662 1045,656M920,697 1060,695M917,715H985M985,712 1012,714 1030,726M975,712 1000,697M985,716 1007,750M935,716 933,768M962,716 968,765H1002M925,768H942M1085,585 1084,618 1082,634M1103,583 1095,596 1092,614M1108,586V604M1084,616 1108,615M1084,627 1106,624M1096,626V634M985,692 998,684M1022,657 1050,664M1050,655 1055,680" fill="none" />
    <path d="M587,528l6,12-3,12M1046,660l12,22M1056,672l8,-4M1052,712l10,-2M995,835l10,-2M615,730l8,3M628,735l6,6M1108,626l10,6" strokeWidth="5" fill="none" />
    <path d="M37,792h2M60,799h3M80,818h3M102,820h3M138,829h3M156,843h3M198,850h3" stroke="#bbb" strokeWidth="3" />
    <path d="M217,863h8M236,866l6,2M246,870l4,4 8,2" strokeWidth="6" fill="none" />
    <path d="M259,883 265,882 271,889 264,895 259,890z" />
    <path d="M1144,901 1152,898 1164,901 1158,906 1148,905zM1137,905h3M1168,902h4" />
  </svg>
);

const sources: [React.ReactNode, boolean][] = [
  [<AddVector />, false], [<AddRaster />, false], [<AddFeather />, false], [<AddPg />, true], [<AddWms />, true],
  [<AddWcs />, false], [<AddWfs />, true], [<AddCsv />, false], [<AddVirtual />, false], [<NewVector />, true],
];

export default function App() {
  return (
    <div className="flex h-[1400px] w-[2560px] flex-col overflow-hidden bg-[#efefef] font-['DejaVu_Sans_Condensed','DejaVu_Sans',sans-serif] text-[11px] leading-[14px] text-black [font-stretch:condensed]">
      <header className="flex h-[23px] shrink-0 items-center bg-[#2e3437] text-white">
        <svg width="16" height="18" viewBox="0 0 16 18" className="ml-0.5"><ellipse cx="7" cy="9.500" rx="3.800" ry="5.300" fill="none" stroke="#e8ea6a" strokeWidth="2.400" /><path d="M8 11l4 5" stroke="#e8ea6a" strokeWidth="2.200" /><path d="M8 9l4-8v5z" fill="#3c9a32" /></svg>
        <span className="ml-[5px] pt-px font-['Open_Sans',sans-serif] text-[12px] tracking-[-0.27px] whitespace-nowrap [font-stretch:normal]">QGIS 2.18.14 - trucksim-concepts</span>
        <div className="ml-auto flex items-center gap-9 pr-[20px] pb-0.5">
          <svg width="10" height="10"><path d="M0 5.500h10" stroke="#fff" /></svg>
          <svg width="10" height="10" fill="none" stroke="#fff"><path d="M2.500 2.500V.5h7v7h-2" /><rect x=".5" y="2.500" width="7" height="7" /></svg>
          <svg width="10" height="10"><path d="M0 0l10 10M10 0L0 10" stroke="#fff" strokeWidth="1.200" /></svg>
        </div>
      </header>

      <nav className="flex h-[23px] shrink-0 items-center border-t border-b border-t-white border-b-[#bababa] pt-0.5 pl-[9px]">
        {menus.map(([a, u, b, w]) => (
          <span key={a + u + b} className={`shrink-0 whitespace-nowrap ${w}`}>{a}<u className="underline-offset-[1.5px]">{u}</u>{b}</span>
        ))}
      </nav>

      <div className="flex h-[39px] shrink-0 items-center border-b border-[#bababa] pl-[6px]">
        <VGrip />
        <Cell><NewFile /></Cell><Cell><Open /></Cell><Cell><Save /></Cell><Cell><SaveAs /></Cell><Cell><NewComposer /></Cell><Cell><Wrench /></Cell>
        <Grip />
        <div className="flex h-[33px] w-[35px] shrink-0 items-center justify-center rounded-[3px] border border-[#8a8a8a] bg-[#d6d6d6]"><Touch /></div>
        <Cell><Hand /></Cell><Cell><Arrows4 /></Cell><Cell><ZoomIn /></Cell><Cell><ZoomOut /></Cell><Cell><Zoom11 /></Cell><Cell><ZoomFull /></Cell>
        <Cell><ZoomSel /></Cell><Cell><ZoomLayer /></Cell><Cell><ZoomLast /></Cell><Cell><ZoomNext /></Cell><Cell><BookmarkNew /></Cell><Cell><Bookmark /></Cell><Cell><Refresh /></Cell>
        <Grip />
        <Cell><Identify /></Cell><Cell arrow="off"><Gear /></Cell><Cell arrow="on"><SelectI /></Cell><Cell arrow="on"><ExprSel /></Cell><Cell><Deselect /></Cell>
        <Cell><Table /></Cell><Cell><Abacus /></Cell><Cell><Sigma /></Cell>
        <div className="relative flex h-[33px] shrink-0">
          <div className="flex w-[35px] items-center justify-center rounded-[3px] border border-[#8a8a8a] bg-linear-to-b from-[#fafafa] to-[#e2e2e2]"><Measure /></div>
          <div className="flex w-3 items-center justify-center rounded-[3px] border border-[#8a8a8a] bg-linear-to-b from-[#fafafa] to-[#e2e2e2]"><Tri /></div>
          <div className="absolute top-[39px] left-[41px] z-10 flex h-[20px] w-[77px] items-center border border-black bg-[#ffffdc] pl-px whitespace-nowrap shadow-[3px_3px_3px_rgba(0,0,0,0.45)]"><span className="tracking-[-0.2px]">Measure Line</span></div>
        </div>
        <Cell><Tip /></Cell><Cell arrow="on"><TextAnn /></Cell>
        <Grip />
        <Cell><Help /></Cell>
      </div>

      <div className="flex h-[39px] shrink-0 items-center border-b-2 border-[#bababa] pl-[6px]">
        <VGrip />
        <Cell><Pencils /></Cell><Cell><Pencil /></Cell><Cell><SaveEdit /></Cell><Cell><AddFeat /></Cell><Cell arrow="off"><CurveI /></Cell><Cell><MoveFeat /></Cell>
        <Cell><NodeTool /></Cell><Cell><Trash /></Cell><Cell><Cut /></Cell><Cell><Copy /></Cell><Cell><Paste /></Cell>
        <Grip />
        <Cell><LabelI /></Cell><Cell><Pie /></Cell><Cell><LabelPin /></Cell><Cell><LabelPin2 /></Cell><Cell><LabelEye /></Cell><Cell><LabelMove /></Cell><Cell><LabelRot /></Cell><Cell><LabelEdit /></Cell>
        <Grip />
        <Cell><Csw /></Cell>
        <Grip />
        <Cell><Python /></Cell>
      </div>

      <div className="flex h-[1246px] shrink-0">
        <aside className="flex w-[51px] shrink-0 flex-col pt-[6px] pl-[5px]">
          <HGrip w={42} />
          {sources.map(([icon, menu], i) => (
            <div key={i} className="flex h-[34px] shrink-0 items-center pl-[3px]">{icon}{menu && <div className="pl-1.5"><Tri /></div>}</div>
          ))}
          <div className="pt-[9px]"><HGrip w={42} /></div>
        </aside>

        <section className="flex w-[296px] shrink-0 flex-col border-l border-[#b5b5b5]">
          <div className="pt-px"><PanelTitle title="Browser Panel" /></div>
          <div className="flex h-[35px] shrink-0 items-center gap-[11px] pl-[8px]">
            <AddSel /><Refresh s={16} /><Funnel /><Collapse /><Info16 />
          </div>
          <div className="mr-px h-[815px] shrink-0 rounded-[2px] border border-[#b0b0b0] bg-white">
            {tree.map((t, i) => (
              <div key={t.label} className="flex h-4 items-center pl-[6px]">
                <Branch plus={t.open} last={i === tree.length - 1} />
                <div className="w-[2px]" />{t.icon}
                <span className="pt-[3px] pl-[5px] tracking-[-0.04px] whitespace-nowrap">{t.label}</span>
              </div>
            ))}
          </div>
          <div className="flex h-[7px] items-center justify-center pr-1"><HGrip w={92} /></div>
          <PanelTitle title="Layers Panel" />
          <div className="flex h-[35px] shrink-0 items-center gap-[11px] pt-px pl-[8px]">
            <Brush /><AddGroup /><Eye /><Funnel />
            <div className="-mr-[3px] flex items-center gap-[6px]"><ExprFilter /><Tri /></div>
            <Collapse down /><Collapse /><Remove />
          </div>
          <div className="mr-px min-h-0 flex-1 rounded-[2px] border border-[#b0b0b0] bg-white">
            <div className="flex h-[17px] items-center bg-[#efefef] pl-[6px]">
              <Branch last /><div className="w-[2px]" /><Check />
              <div className="ml-[6px] size-4 border border-[#4a5a66] bg-[#8c806e]" />
              <span className="ml-[6px] pt-0.5 font-bold tracking-[0.52px] whitespace-nowrap underline">cb_2016_us_state_500k</span>
            </div>
          </div>
        </section>

        <div className="flex w-[5px] shrink-0 items-center justify-center"><VGrip h={92} /></div>
        <main className="relative flex-1 rounded-[2px] border-2 border-[#bcbcbc] bg-white">
          <div className="absolute top-[454px] left-[496px]"><States /></div>
          <svg width="150" height="190" viewBox="0 0 450 570" fill="none" stroke="#2a2522" strokeWidth="5" className="absolute top-[594px] left-[1566px]">
            <path d="M324,42l8,3M332,50h6M338,47h4M358,52h2M371,60l4,-3M376,58h8M382,62l5,1M388,66h4M394,60h5" />
            <path d="M49,458h2M53,464h3M57,475v5M58,484v4M57,493v3M60,505h2M56,512v6M53,522v6M47,532l-2,4" strokeWidth="3.500" />
          </svg>
        </main>
      </div>

      <footer className="flex min-h-0 flex-1 items-center pl-[5px] whitespace-nowrap">
        <span className="w-[1517px] shrink-0 pt-0.5 tracking-[-0.115px]">Saved project to: D:\Users\Dwayne\Documents\GIS\projects\trucksim-concepts\trucksim-concepts.qgs</span>
        <span className="w-[58px] shrink-0 pt-0.5">Coordinate</span>
        <div className="flex h-[20px] w-[299px] shrink-0 items-center justify-center rounded-[2px] border border-[#adadad] bg-white pt-0.5 tracking-[-0.15px]">-7870739,27320465</div>
        <div className="ml-[5px] w-[29px] shrink-0">
          <Ic s={16}><g stroke="#333" strokeWidth="1.800"><ellipse cx="15" cy="17" rx="5" ry="6.500" transform="rotate(-40 15 17)" fill="#e8e8e8" /><ellipse cx="6" cy="6" rx="3" ry="6" transform="rotate(-35 6 6)" fill="#999" /><ellipse cx="12" cy="5" rx="2.500" ry="5" transform="rotate(-20 12 5)" fill="#bbb" /><path d="M2 10l9 6M17 8l6-6M10 15l8-7" /><circle cx="16" cy="18" r="1.500" /></g></Ic>
        </div>
        <span className="w-[29px] shrink-0 pt-0.5">Scale</span>
        <div className="flex h-[20px] w-[89px] shrink-0 items-center rounded-[2px] border border-[#adadad] bg-white">
          <span className="flex-1 pt-0.5 pl-px tracking-[-0.1px]">:126,610,656</span>
          <div className="flex h-full w-[16px] items-center justify-center border-l border-[#c4c4c4] bg-[#f3f3f3]"><svg width="7" height="4"><path d="M0 0h7L3.500 4z" /></svg></div>
        </div>
        <svg width="13" height="17" viewBox="0 0 13 17" className="ml-[6px] shrink-0"><path d="M2.500 8V4.500a4 4 0 018 0V8" fill="none" stroke="#8a8a8a" strokeWidth="1.500" /><rect x=".5" y="7.500" width="12" height="9" rx="1" fill="#555" /></svg>
        <span className="ml-[15px] w-[48px] shrink-0 pt-0.5">Magnifier</span>
        <Spin v="100%" w="w-[77px]" />
        <span className="ml-[8px] w-[51px] shrink-0 pt-0.5">Rotation</span>
        <Spin v="0.0" w="w-[76px]" />
        <div className="ml-[7px] flex w-[71px] shrink-0 items-center gap-1"><Check /><span className="pt-0.5">Render</span></div>
        <div className="flex w-[126px] shrink-0 items-center gap-1">
          <Ic s={15}><circle cx="12" cy="12" r="10" fill="#aaa" stroke="#333" strokeWidth="2.200" /><path d="M12 2l9 10-9 10-9-10z" fill="#eee" stroke="#222" strokeWidth="1.800" /><path d="M7.500 7.500h9v9h-9zM12 1v6M12 17v6M1 12h6M17 12h6" stroke="#333" strokeWidth="1.300" /></Ic>
          <span className="pt-0.5">EPSG:3857 (OTF)</span>
        </div>
        <svg width="16" height="15" viewBox="0 0 16 15" className="shrink-0"><path d="M8 0c5 0 8 2.500 8 6 0 2-1 3.500-2.500 4.500L14 15l-4-3.500C4 12 0 10 0 6c0-3.500 3-6 8-6z" fill="#666" /><path d="M3.500 6h2M7 6h2M10.500 6h2" stroke="#fff" strokeWidth="2" /></svg>
      </footer>
    </div>
  );
}
